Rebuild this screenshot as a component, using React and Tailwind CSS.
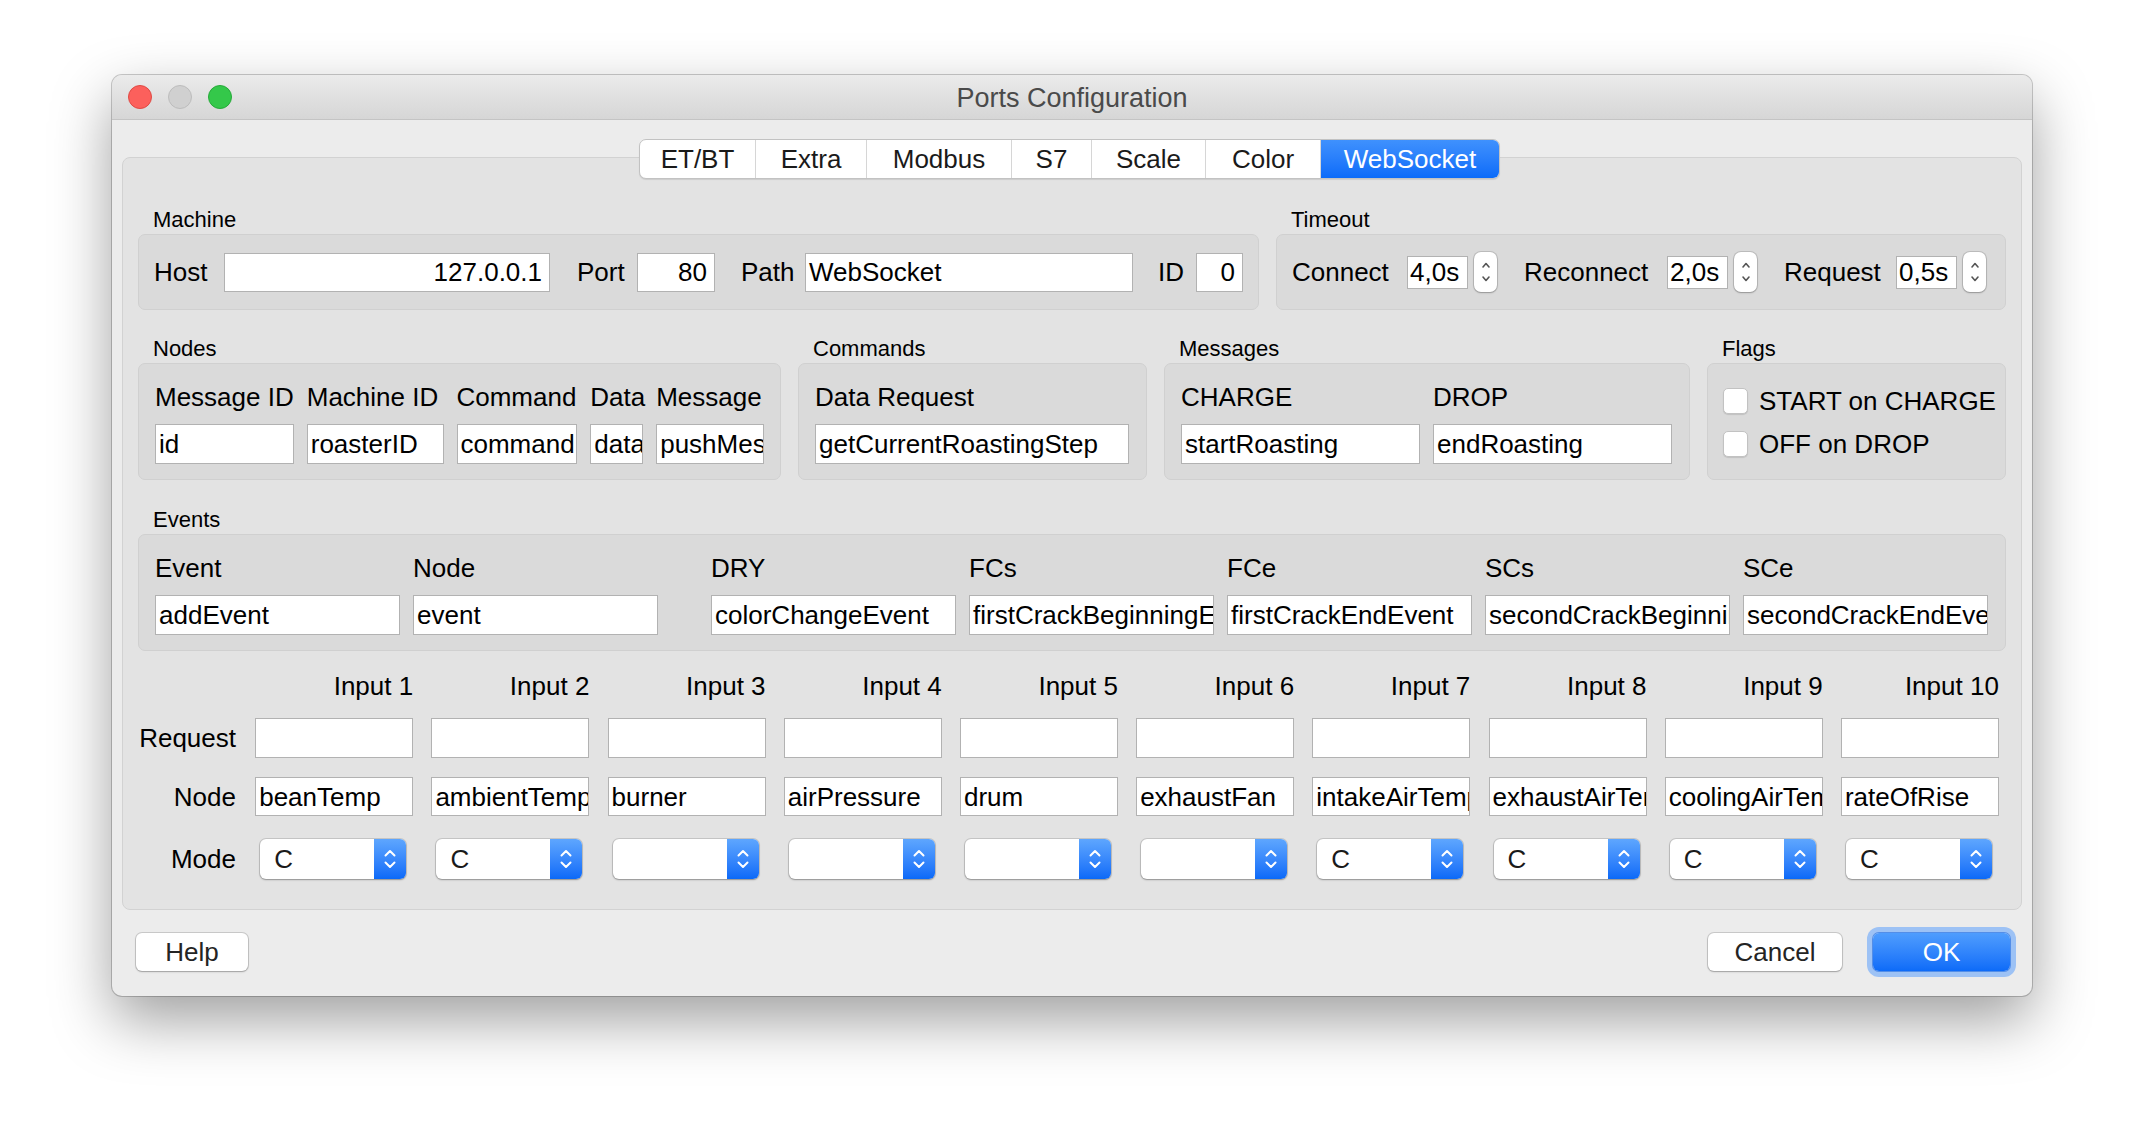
import React from 'react';

function Field({ className = '', text = '', right = false }) {
  return (
    <div
      className={`bg-white border border-[#b2b2b2] flex items-center overflow-hidden whitespace-nowrap text-[26px] leading-none text-black ${right ? 'justify-end pr-[7px]' : 'justify-start pl-[3px]'} ${className}`}
    >
      <span className="shrink-0">{text}</span>
    </div>
  );
}

function SpinArrows() {
  return (
    <div className="ml-[6px] w-[23px] h-[40px] rounded-[7px] bg-white shadow-[0_0_0_1px_rgba(0,0,0,0.13),0_1px_2px_rgba(0,0,0,0.22)] flex items-center justify-center">
      <svg width="12" height="28" viewBox="0 0 12 28" fill="none" stroke="#555" strokeWidth="1.6" strokeLinecap="round" strokeLinejoin="round">
        <path d="M3 9 L6 5.5 L9 9" />
        <path d="M3 19 L6 22.5 L9 19" />
      </svg>
    </div>
  );
}

function Select({ value = '' }) {
  return (
    <div className="pl-[5px]">
      <div className="w-[146px] h-[40px] rounded-[6px] bg-white shadow-[0_0_0_1px_rgba(0,0,0,0.12),0_1px_2px_rgba(0,0,0,0.28)] flex overflow-hidden">
        <div className="flex-1 flex items-center pl-[14px] text-[26px] leading-none text-[#1a1a1a]">{value}</div>
        <div className="w-[32px] bg-linear-to-b from-[#5ea6fe] to-[#0a69f8] flex items-center justify-center">
          <svg width="14" height="26" viewBox="0 0 14 26" fill="none" stroke="#ffffff" strokeWidth="2" strokeLinecap="round" strokeLinejoin="round">
            <path d="M2.5 9.5 L7 5 L11.5 9.5" />
            <path d="M2.5 16.5 L7 21 L11.5 16.5" />
          </svg>
        </div>
      </div>
    </div>
  );
}

function SectionLabel({ children }) {
  return <div className="pl-[15px] h-[26px] leading-[26px] text-[22px] text-black mb-[1px]">{children}</div>;
}

function Checkbox({ label }) {
  return (
    <div className="flex items-center h-[26px]">
      <div className="w-[25px] h-[26px] rounded-[5px] bg-white border border-[#c2c2c2] shadow-[0_1px_1px_rgba(0,0,0,0.12)]" />
      <span className="ml-[11px] text-[26px] leading-none text-black">{label}</span>
    </div>
  );
}

const tabs = [
  { t: 'ET/BT', w: 'w-[116px]' },
  { t: 'Extra', w: 'w-[111px]' },
  { t: 'Modbus', w: 'w-[145px]' },
  { t: 'S7', w: 'w-[80px]' },
  { t: 'Scale', w: 'w-[114px]' },
  { t: 'Color', w: 'w-[115px]' },
];

const inputsNode = ['beanTemp', 'ambientTemp', 'burner', 'airPressure', 'drum', 'exhaustFan', 'intakeAirTemp', 'exhaustAirTemp', 'coolingAirTemp', 'rateOfRise'];
const inputsMode = ['C', 'C', '', '', '', '', 'C', 'C', 'C', 'C'];

export default function App() {
  return (
    <div className="w-[2144px] h-[1144px] bg-white flex justify-center items-start pt-[75px] font-['Liberation_Sans',Arial,sans-serif]">
      <div className="w-[1920px] h-[921px] rounded-[10px] overflow-hidden bg-[#ececec] shadow-[0_24px_60px_rgba(0,0,0,0.38),0_0_0_1px_rgba(0,0,0,0.2)] flex flex-col">
        {/* Title bar */}
        <div className="h-[45px] shrink-0 bg-linear-to-b from-[#ebebeb] to-[#d6d6d6] border-b border-[#c4c4c4] grid grid-cols-[1fr_auto_1fr] items-center">
          <div className="flex items-center pl-[16px] gap-[16px]">
            <div className="w-[24px] h-[24px] rounded-full bg-[#fc605c] border border-[#de4a44]" />
            <div className="w-[24px] h-[24px] rounded-full bg-[#d0d0d0] border border-[#bcbcbc]" />
            <div className="w-[24px] h-[24px] rounded-full bg-[#34c84a] border border-[#27a93a]" />
          </div>
          <div className="text-[27px] leading-none text-[#4a4a4a] pt-[3px]">Ports Configuration</div>
          <div />
        </div>

        {/* Tabs */}
        <div className="pt-[19px] pr-[5px] flex justify-center relative z-10">
          <div className="flex h-[40px] rounded-[7px] border border-[#c2c2c2] bg-white shadow-[0_1px_1px_rgba(0,0,0,0.1)] overflow-hidden text-[26px] leading-none text-[#1a1a1a]">
            {tabs.map((tb) => (
              <div key={tb.t} className={`${tb.w} flex items-center justify-center border-r border-[#d6d6d6]`}>
                {tb.t}
              </div>
            ))}
            <div className="w-[178px] flex items-center justify-center text-white bg-linear-to-b from-[#3f91fd] to-[#0a6bf9]">WebSocket</div>
          </div>
        </div>

        {/* Pane */}
        <div className="mx-[10px] -mt-[22px] rounded-[8px] border border-[#d2d2d2] bg-[#e3e3e3] pt-[49px] pb-[30px] px-[15px] text-black">
          {/* Row 1 */}
          <div className="flex gap-[17px]">
            <div className="w-[1121px] flex flex-col">
              <SectionLabel>Machine</SectionLabel>
              <div className="h-[76px] rounded-[7px] bg-[#dadada] border border-[#d0d0d0] flex items-center pl-[15px] text-[26px] leading-none">
                <span className="w-[70px]">Host</span>
                <Field className="w-[326px] h-[39px]" text="127.0.0.1" right />
                <span className="ml-[27px] w-[60px]">Port</span>
                <Field className="w-[78px] h-[39px]" text="80" right />
                <span className="ml-[26px] w-[64px]">Path</span>
                <Field className="w-[328px] h-[39px]" text="WebSocket" />
                <span className="ml-[25px] w-[38px]">ID</span>
                <Field className="w-[47px] h-[39px]" text="0" right />
              </div>
            </div>
            <div className="flex-1 flex flex-col">
              <SectionLabel>Timeout</SectionLabel>
              <div className="h-[76px] rounded-[7px] bg-[#dadada] border border-[#d0d0d0] flex items-center pl-[15px] text-[26px] leading-none">
                <span className="w-[115px]">Connect</span>
                <Field className="w-[61px] h-[33px] !pl-[2px]" text="4,0s" />
                <SpinArrows />
                <span className="ml-[27px] w-[143px]">Reconnect</span>
                <Field className="w-[61px] h-[33px] !pl-[2px]" text="2,0s" />
                <SpinArrows />
                <span className="ml-[27px] w-[112px]">Request</span>
                <Field className="w-[61px] h-[33px] !pl-[2px]" text="0,5s" />
                <SpinArrows />
              </div>
            </div>
          </div>

          {/* Row 2 */}
          <div className="flex gap-[17px] mt-[26px]">
            <div className="w-[643px] flex flex-col">
              <SectionLabel>Nodes</SectionLabel>
              <div className="h-[117px] rounded-[7px] bg-[#dadada] border border-[#d0d0d0] pt-[18px] px-[16px] text-[26px]">
                <div className="flex gap-[13px] h-[30px] items-center leading-none whitespace-nowrap">
                  <span className="w-[139px]">Message ID</span>
                  <span className="w-[137px]">Machine ID</span>
                  <span className="w-[121px]">Command</span>
                  <span className="w-[53px]">Data</span>
                  <span className="w-[108px]">Message</span>
                </div>
                <div className="flex gap-[13px] mt-[12px]">
                  <Field className="w-[139px] h-[40px]" text="id" />
                  <Field className="w-[137px] h-[40px]" text="roasterID" />
                  <Field className="w-[121px] h-[40px]" text="command" />
                  <Field className="w-[53px] h-[40px]" text="data" />
                  <Field className="w-[108px] h-[40px]" text="pushMessage" />
                </div>
              </div>
            </div>
            <div className="w-[349px] flex flex-col">
              <SectionLabel>Commands</SectionLabel>
              <div className="h-[117px] rounded-[7px] bg-[#dadada] border border-[#d0d0d0] pt-[18px] px-[16px] text-[26px]">
                <div className="h-[30px] flex items-center leading-none">Data Request</div>
                <div className="flex mt-[12px]">
                  <Field className="w-[314px] h-[40px]" text="getCurrentRoastingStep" />
                </div>
              </div>
            </div>
            <div className="w-[526px] flex flex-col">
              <SectionLabel>Messages</SectionLabel>
              <div className="h-[117px] rounded-[7px] bg-[#dadada] border border-[#d0d0d0] pt-[18px] px-[16px] text-[26px]">
                <div className="flex gap-[13px] h-[30px] items-center leading-none">
                  <span className="w-[239px]">CHARGE</span>
                  <span className="w-[239px]">DROP</span>
                </div>
                <div className="flex gap-[13px] mt-[12px]">
                  <Field className="w-[239px] h-[40px]" text="startRoasting" />
                  <Field className="w-[239px] h-[40px]" text="endRoasting" />
                </div>
              </div>
            </div>
            <div className="flex-1 flex flex-col">
              <SectionLabel>Flags</SectionLabel>
              <div className="h-[117px] rounded-[7px] bg-[#dadada] border border-[#d0d0d0] pt-[24px] pl-[15px] flex flex-col gap-[17px]">
                <Checkbox label="START on CHARGE" />
                <Checkbox label="OFF on DROP" />
              </div>
            </div>
          </div>

          {/* Row 3 Events */}
          <div className="mt-[27px] flex flex-col">
            <SectionLabel>Events</SectionLabel>
            <div className="h-[117px] rounded-[7px] bg-[#dadada] border border-[#d0d0d0] pt-[18px] px-[16px] text-[26px]">
              <div className="flex gap-[13px] h-[30px] items-center leading-none">
                <span className="w-[245px]">Event</span>
                <span className="w-[245px]">Node</span>
                <span className="w-[245px] ml-[40px]">DRY</span>
                <span className="w-[245px]">FCs</span>
                <span className="w-[245px]">FCe</span>
                <span className="w-[245px]">SCs</span>
                <span className="w-[245px]">SCe</span>
              </div>
              <div className="flex gap-[13px] mt-[12px]">
                <Field className="w-[245px] h-[40px]" text="addEvent" />
                <Field className="w-[245px] h-[40px]" text="event" />
                <Field className="w-[245px] h-[40px] ml-[40px]" text="colorChangeEvent" />
                <Field className="w-[245px] h-[40px]" text="firstCrackBeginningEvent" />
                <Field className="w-[245px] h-[40px]" text="firstCrackEndEvent" />
                <Field className="w-[245px] h-[40px]" text="secondCrackBeginningEvent" />
                <Field className="w-[245px] h-[40px]" text="secondCrackEndEvent" />
              </div>
            </div>
          </div>

          {/* Inputs grid */}
          <div className="mt-[20px] text-[26px] leading-none">
            <div className="grid grid-cols-[99px_repeat(10,158px)] gap-x-[18.2px] h-[30px] items-center">
              <div />
              {Array.from({ length: 10 }, (_, i) => (
                <div key={i} className="text-right">{`Input ${i + 1}`}</div>
              ))}
            </div>
            <div className="grid grid-cols-[99px_repeat(10,158px)] gap-x-[18.2px] mt-[17px] h-[40px] items-center">
              <div className="text-right pr-[1px]">Request</div>
              {Array.from({ length: 10 }, (_, i) => (
                <Field key={i} className="h-[40px]" text="" />
              ))}
            </div>
            <div className="grid grid-cols-[99px_repeat(10,158px)] gap-x-[18.2px] mt-[19px] h-[39px] items-center">
              <div className="text-right pr-[1px]">Node</div>
              {inputsNode.map((n) => (
                <Field key={n} className="h-[39px]" text={n} />
              ))}
            </div>
            <div className="grid grid-cols-[99px_repeat(10,158px)] gap-x-[18.2px] mt-[23px] h-[40px] items-center">
              <div className="text-right pr-[1px]">Mode</div>
              {inputsMode.map((m, i) => (
                <Select key={i} value={m} />
              ))}
            </div>
          </div>
        </div>

        {/* Buttons */}
        <div className="mt-[23px] flex items-center pl-[24px] pr-[22px] text-[26px] leading-none">
          <div className="w-[112px] h-[38px] rounded-[6px] bg-white shadow-[0_0_0_1px_rgba(0,0,0,0.14),0_1px_2px_rgba(0,0,0,0.22)] flex items-center justify-center text-[#242424]">Help</div>
          <div className="flex-1" />
          <div className="w-[134px] h-[38px] rounded-[6px] bg-white shadow-[0_0_0_1px_rgba(0,0,0,0.14),0_1px_2px_rgba(0,0,0,0.22)] flex items-center justify-center text-[#242424]">Cancel</div>
          <div className="ml-[31px] w-[137px] h-[38px] rounded-[6px] bg-linear-to-b from-[#4f9dfe] to-[#0c6bf8] shadow-[0_0_0_1px_rgba(10,90,220,0.5),0_0_0_6px_#9dc2f5] flex items-center justify-center text-white">OK</div>
        </div>
      </div>
    </div>
  );
}
